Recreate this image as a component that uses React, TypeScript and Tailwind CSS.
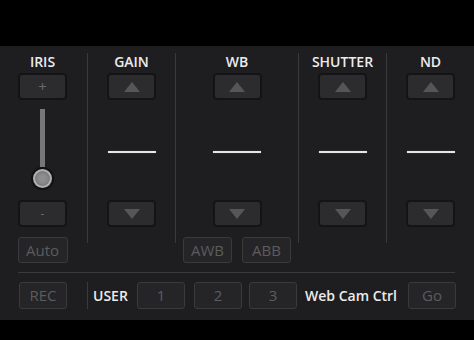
import React from "react";

const font = { fontFamily: '"Open Sans", "Noto Sans", sans-serif' };

const Up = () => (
  <svg width="16" height="10" viewBox="0 0 16 10">
    <polygon points="8,0 16,10 0,10" fill="#565658" />
  </svg>
);

const Down = () => (
  <svg width="16" height="10" viewBox="0 0 16 10">
    <polygon points="0,0 16,0 8,10" fill="#565658" />
  </svg>
);

const ArrowButton = ({ children, className = "" }: { children: React.ReactNode; className?: string }) => (
  <div
    className={`flex items-center justify-center w-[49px] h-[27px] rounded-[4px] bg-[#2c2c2e] border-2 border-[#141416] ${className}`}
  >
    {children}
  </div>
);

const FlatButton = ({ label, className = "" }: { label: string; className?: string }) => (
  <div
    className={`flex items-center justify-center w-[48px] h-[26px] rounded-[3px] bg-[#252527] border border-[#3a3a3c] text-[15px] text-[#5c5c5e] ${className}`}
  >
    {label}
  </div>
);

const Label = ({ text }: { text: string }) => (
  <div className="h-[18px] leading-[18px] text-[14px] font-semibold text-[#ececec]">{text}</div>
);

const Dash = () => <div className="w-[48px] h-[2px] bg-[#e6e6e6] shadow-[0_0_1px_#888]" />;

const Divider = () => <div className="w-px mt-[7px] h-[190px] bg-[#3a3a3c]" />;

const StepColumn = ({ name, width, extra }: { name: string; width: string; extra?: React.ReactNode }) => (
  <div className={`flex flex-col items-center pt-[7px] ${width}`}>
    <Label text={name} />
    <ArrowButton className="mt-[2px]">
      <Up />
    </ArrowButton>
    <div className="mt-[51px]">
      <Dash />
    </div>
    <ArrowButton className="mt-[47px]">
      <Down />
    </ArrowButton>
    {extra}
  </div>
);

export default function App() {
  return (
    <div className="w-[474px] h-[340px] bg-black pt-[46px]" style={font}>
      <div className="w-full bg-[#1e1e20] pb-[11px]">
        <div className="flex">
          {/* IRIS */}
          <div className="flex flex-col items-center pt-[7px] w-[87px] pr-[2px]">
            <Label text="IRIS" />
            <ArrowButton className="mt-[2px]">
              <span className="text-[15px] leading-none text-[#6a6a6c]">+</span>
            </ArrowButton>
            <div className="mt-[9px] w-[5px] h-[58px] bg-[#767678]" />
            <div className="w-[23px] h-[23px] rounded-full bg-[#111] p-[2px]">
              <div className="w-full h-full rounded-full bg-[#8e8e90] border-2 border-[#b0b0b2] shadow-[inset_0_0_4px_#666]" />
            </div>
            <ArrowButton className="mt-[10px]">
              <span className="text-[12px] leading-none text-[#6a6a6c]">-</span>
            </ArrowButton>
            <FlatButton label="Auto" className="mt-[10px] w-[50px]" />
          </div>
          <Divider />
          <StepColumn name="GAIN" width="w-[87px]" />
          <Divider />
          <StepColumn
            name="WB"
            width="w-[122px]"
            extra={
              <div className="flex gap-[10px] mt-[10px]">
                <FlatButton label="AWB" className="w-[49px]" />
                <FlatButton label="ABB" className="w-[49px]" />
              </div>
            }
          />
          <Divider />
          <StepColumn name="SHUTTER" width="w-[87px]" />
          <Divider />
          <StepColumn name="ND" width="w-[87px]" />
        </div>

        <div className="mt-[9px] ml-[18px] w-[437px] h-px bg-[#3a3a3c]" />

        <div className="flex items-center mt-[9px] h-[27px]">
          <FlatButton label="REC" className="ml-[19px] h-[27px]" />
          <div className="ml-[20px] w-px h-[27px] bg-[#3a3a3c]" />
          <span className="ml-[5px] w-[44px] text-[14px] font-semibold text-[#ececec]">USER</span>
          <FlatButton label="1" className="w-[47px] h-[27px]" />
          <FlatButton label="2" className="ml-[9px] w-[47px] h-[27px]" />
          <FlatButton label="3" className="ml-[7px] h-[27px]" />
          <span className="ml-[8px] w-[103px] text-[14px] font-semibold text-[#ececec] whitespace-nowrap">
            Web Cam Ctrl
          </span>
          <FlatButton label="Go" className="h-[27px]" />
        </div>
      </div>
    </div>
  );
}
